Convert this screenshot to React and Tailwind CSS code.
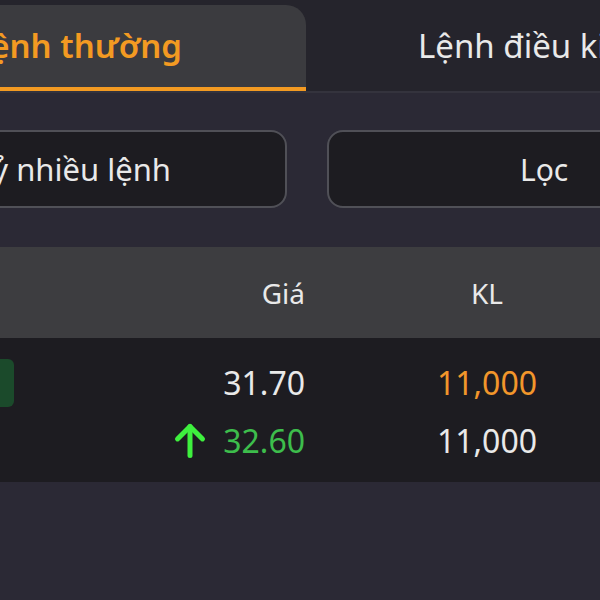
const rows = [
  { price: '31.70', priceTone: 'text-[#e9e9e9]', qty: '11,000', qtyTone: 'text-[#f2962b]', badge: true },
  { price: '32.60', priceTone: 'text-[#3dbd4c]', qty: '11,000', qtyTone: 'text-[#e9e9e9]', up: true },
]

function UpArrow() {
  return (
    <svg className="-mr-[6px] h-[50px] w-[50px] text-[#3ef03e]" viewBox="0 0 24 24" fill="none" stroke="currentColor" strokeWidth="2.4" strokeLinecap="round" strokeLinejoin="round">
      <path d="M12 19V5" />
      <path d="m6 11 6-6 6 6" />
    </svg>
  )
}

export default function App() {
  return (
    <div className="h-[600px] w-[600px] overflow-hidden bg-[#2b2935] font-['Noto_Sans',sans-serif]">
      {/* tabs */}
      <div className="flex h-[93px] border-b-2 border-[#34333d] bg-[#25242c]">
        <div className="mt-[5px] flex w-[306px] shrink-0 items-center justify-end overflow-hidden rounded-tr-[20px] border-b-4 border-[#f39a22] bg-[#3b3b3f] pr-[124px]">
          <span className="whitespace-nowrap text-[33px] font-semibold text-[#f39a22]">Lệnh thường</span>
        </div>
        <div className="flex flex-1 items-center overflow-hidden pl-[112px]">
          <span className="whitespace-nowrap text-[33px] text-[#e9e9e9]">Lệnh điều kiện</span>
        </div>
      </div>

      {/* actions */}
      <div className="flex gap-[40px] pt-[37px] pb-[39px]">
        <div className="-ml-[60px] flex h-[78px] w-[347px] shrink-0 items-center justify-end overflow-hidden rounded-[16px] border-2 border-[#505057] bg-[#1d1c21] pr-[114px]">
          <span className="whitespace-nowrap text-[31px] text-[#e9e9e9]">Huỷ nhiều lệnh</span>
        </div>
        <div className="flex h-[78px] w-[400px] shrink-0 items-center rounded-[16px] border-2 border-[#505057] bg-[#1d1c21] pl-[191px]">
          <span className="whitespace-nowrap text-[30px] text-[#e9e9e9]">Lọc</span>
        </div>
      </div>

      {/* table */}
      <div className="grid h-[91px] grid-cols-[305px_364px] items-center bg-[#3d3d40] text-[28px] text-[#e9e9e9]">
        <div className="text-right">Giá</div>
        <div className="text-center">KL</div>
      </div>
      <div className="bg-[#1d1c21] pt-[16px] pb-[12px]">
        {rows.map((row) => (
          <div className="grid h-[58px] grid-cols-[305px_364px] items-center text-[32px]" key={row.price}>
            <div className="flex items-center justify-between">
              {row.badge ? <div className="h-[48px] w-[14px] rounded-r-[6px] bg-[#1b4a2b]" /> : <span />}
              <div className="flex items-center gap-[14px]">
                {row.up && <UpArrow />}
                <span className={row.priceTone}>{row.price}</span>
              </div>
            </div>
            <div className={`text-center ${row.qtyTone}`}>{row.qty}</div>
          </div>
        ))}
      </div>
    </div>
  )
}
